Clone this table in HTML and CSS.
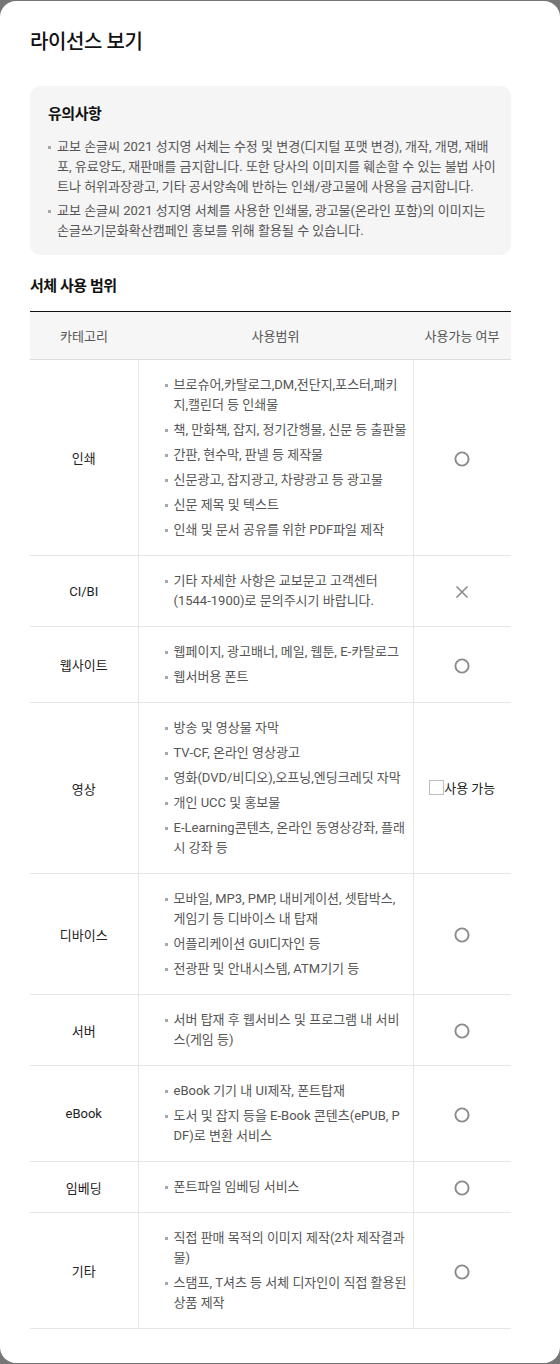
FILE: index.html
```html
<!DOCTYPE html>
<html lang="ko">
<head>
<meta charset="utf-8">
<title>라이선스 보기</title>
<link rel="stylesheet" href="styles.css">
</head>
<body>
<div class="modal">
  <h1 class="modal-title">라이선스 보기</h1>

  <section class="notice">
    <h2 class="notice-title">유의사항</h2>
    <ul class="dot-list notice-list">
      <li>교보 손글씨 2021 성지영 서체는 수정 및 변경(디지털 포맷 변경), 개작, 개명, 재배포, 유료양도, 재판매를 금지합니다. 또한 당사의 이미지를 훼손할 수 있는 불법 사이트나 허위과장광고, 기타 공서양속에 반하는 인쇄/광고물에 사용을 금지합니다.</li>
      <li><span>교보 손글씨 2021 성지영 서체를 사용한 인쇄물, 광고물(온라인 포함)의 이미지는 <span class="keep">손글쓰기문화확산캠페인</span> 홍보를 위해 활용될 수 있습니다.</span></li>
    </ul>
  </section>

  <h2 class="section-title">서체 사용 범위</h2>

  <table class="scope">
    <thead>
      <tr>
        <th class="col-cat">카테고리</th>
        <th class="col-use">사용범위</th>
        <th class="col-ok">사용가능 여부</th>
      </tr>
    </thead>
    <tbody>
      <tr>
        <td class="cat">인쇄</td>
        <td class="use"><ul class="dot-list">
          <li>브로슈어,카탈로그,DM,전단지,포스터,패키지,캘린더 등 인쇄물</li>
          <li>책, 만화책, 잡지, 정기간행물, 신문 등 출판물</li>
          <li>간판, 현수막, 판넬 등 제작물</li>
          <li>신문광고, 잡지광고, 차량광고 등 광고물</li>
          <li>신문 제목 및 텍스트</li>
          <li>인쇄 및 문서 공유를 위한 PDF파일 제작</li>
        </ul></td>
        <td class="ok"><svg class="mark" viewBox="0 0 16 16"><circle cx="8" cy="8" r="6.6" fill="none" stroke="#8a8a8a" stroke-width="1.9"/></svg></td>
      </tr>
      <tr>
        <td class="cat">CI/BI</td>
        <td class="use"><ul class="dot-list">
          <li><span>기타 자세한 사항은 교보문고 고객센터 <span class="nowrap">(1544-1900)로</span> 문의주시기 바랍니다.</span></li>
        </ul></td>
        <td class="ok"><svg class="mark" viewBox="0 0 16 16"><path d="M2.5 2.5 L13.5 13.5 M13.5 2.5 L2.5 13.5" fill="none" stroke="#8a8a8a" stroke-width="1.6"/></svg></td>
      </tr>
      <tr>
        <td class="cat">웹사이트</td>
        <td class="use"><ul class="dot-list">
          <li>웹페이지, 광고배너, 메일, 웹툰, E-카탈로그</li>
          <li>웹서버용 폰트</li>
        </ul></td>
        <td class="ok"><svg class="mark" viewBox="0 0 16 16"><circle cx="8" cy="8" r="6.6" fill="none" stroke="#8a8a8a" stroke-width="1.9"/></svg></td>
      </tr>
      <tr>
        <td class="cat">영상</td>
        <td class="use"><ul class="dot-list">
          <li>방송 및 영상물 자막</li>
          <li>TV-CF, 온라인 영상광고</li>
          <li>영화(DVD/비디오),오프닝,엔딩크레딧 자막</li>
          <li>개인 UCC 및 홍보물</li>
          <li>E-Learning콘텐츠, 온라인 동영상강좌, 플래시 강좌 등</li>
        </ul></td>
        <td class="ok"><span class="check-label"><span class="checkbox"></span>사용 가능</span></td>
      </tr>
      <tr>
        <td class="cat">디바이스</td>
        <td class="use"><ul class="dot-list">
          <li>모바일, MP3, PMP, 내비게이션, 셋탑박스, 게임기 등 디바이스 내 탑재</li>
          <li>어플리케이션 GUI디자인 등</li>
          <li>전광판 및 안내시스템, ATM기기 등</li>
        </ul></td>
        <td class="ok"><svg class="mark" viewBox="0 0 16 16"><circle cx="8" cy="8" r="6.6" fill="none" stroke="#8a8a8a" stroke-width="1.9"/></svg></td>
      </tr>
      <tr>
        <td class="cat">서버</td>
        <td class="use"><ul class="dot-list">
          <li>서버 탑재 후 웹서비스 및 프로그램 내 서비스(게임 등)</li>
        </ul></td>
        <td class="ok"><svg class="mark" viewBox="0 0 16 16"><circle cx="8" cy="8" r="6.6" fill="none" stroke="#8a8a8a" stroke-width="1.9"/></svg></td>
      </tr>
      <tr>
        <td class="cat">eBook</td>
        <td class="use"><ul class="dot-list">
          <li>eBook 기기 내 UI제작, 폰트탑재</li>
          <li>도서 및 잡지 등을 E-Book 콘텐츠(ePUB, PDF)로 변환 서비스</li>
        </ul></td>
        <td class="ok"><svg class="mark" viewBox="0 0 16 16"><circle cx="8" cy="8" r="6.6" fill="none" stroke="#8a8a8a" stroke-width="1.9"/></svg></td>
      </tr>
      <tr>
        <td class="cat">임베딩</td>
        <td class="use"><ul class="dot-list">
          <li>폰트파일 임베딩 서비스</li>
        </ul></td>
        <td class="ok"><svg class="mark" viewBox="0 0 16 16"><circle cx="8" cy="8" r="6.6" fill="none" stroke="#8a8a8a" stroke-width="1.9"/></svg></td>
      </tr>
      <tr>
        <td class="cat">기타</td>
        <td class="use"><ul class="dot-list">
          <li>직접 판매 목적의 이미지 제작(2차 제작결과물)</li>
          <li>스탬프, T셔츠 등 서체 디자인이 직접 활용된 상품 제작</li>
        </ul></td>
        <td class="ok"><svg class="mark" viewBox="0 0 16 16"><circle cx="8" cy="8" r="6.6" fill="none" stroke="#8a8a8a" stroke-width="1.9"/></svg></td>
      </tr>
    </tbody>
  </table>
</div>
</body>
</html>
```

FILE: styles.css
```css
html, body {
  margin: 0;
  padding: 0;
}

body {
  background: #767676;
  font-family: Roboto, "Noto Sans CJK KR", sans-serif;
  color: #222;
  min-height: 1364px;
}

.modal {
  margin-top: 1px;
  background: #fff;
  border-radius: 16px;
  padding: 27px 49px 34px 30px;
  min-height: 1301px;
}

.modal-title {
  margin: 0;
  font-size: 20px;
  line-height: 28px;
  font-weight: 500;
  letter-spacing: -0.02em;
  color: #111;
}

.notice {
  margin-top: 30px;
  background: #f5f5f5;
  border-radius: 10px;
  padding: 17px 10px 14px 18px;
}

.notice-title {
  margin: 0;
  font-size: 15px;
  line-height: 22px;
  font-weight: 700;
  letter-spacing: -0.03em;
  color: #111;
}

.dot-list {
  list-style: none;
  margin: 0;
  padding: 0;
  font-size: 13px;
  line-height: 20px;
  color: #555;
  word-break: break-all;
}

.dot-list li {
  display: flex;
  align-items: flex-start;
}

.dot-list li + li {
  margin-top: 5px;
}

.dot-list li::before {
  content: "";
  flex: none;
  width: 3px;
  height: 3px;
  background: #a8a8a8;
  margin-top: 9px;
  margin-right: 6px;
}

.nowrap {
  white-space: nowrap;
}

.keep {
  word-break: keep-all;
}

.notice-list {
  margin-top: 12px;
}

.notice-list li + li {
  margin-top: 4px;
}

.section-title {
  margin: 20px 0 0;
  font-size: 15px;
  line-height: 22px;
  font-weight: 700;
  letter-spacing: -0.03em;
  color: #111;
}

.scope {
  margin-top: 14px;
  width: 100%;
  border-collapse: collapse;
  table-layout: fixed;
  border-top: 1px solid #111;
}

.col-cat { width: 108px; }
.col-use { width: 275px; }
.col-ok { width: 98px; }

.scope th {
  height: 47px;
  padding: 0;
  background: #f6f6f6;
  font-size: 13px;
  font-weight: 400;
  color: #555;
  border-bottom: 1px solid #dcdcdc;
}

.scope td {
  padding: 0;
  border-bottom: 1px solid #e6e6e6;
  vertical-align: middle;
}

.scope td + td {
  border-left: 1px solid #e6e6e6;
}

.cat {
  text-align: center;
  font-size: 13px;
  color: #222;
}

.scope td.use {
  padding: 15px 6px 15px 26px;
}

.ok {
  text-align: center;
}

.mark {
  display: inline-block;
  width: 16px;
  height: 16px;
  vertical-align: middle;
}

.check-label {
  display: inline-flex;
  align-items: center;
  font-size: 13px;
  color: #222;
}

.checkbox {
  width: 13px;
  height: 13px;
  border: 1px solid #bdbdbd;
  background: #fff;
}
```
